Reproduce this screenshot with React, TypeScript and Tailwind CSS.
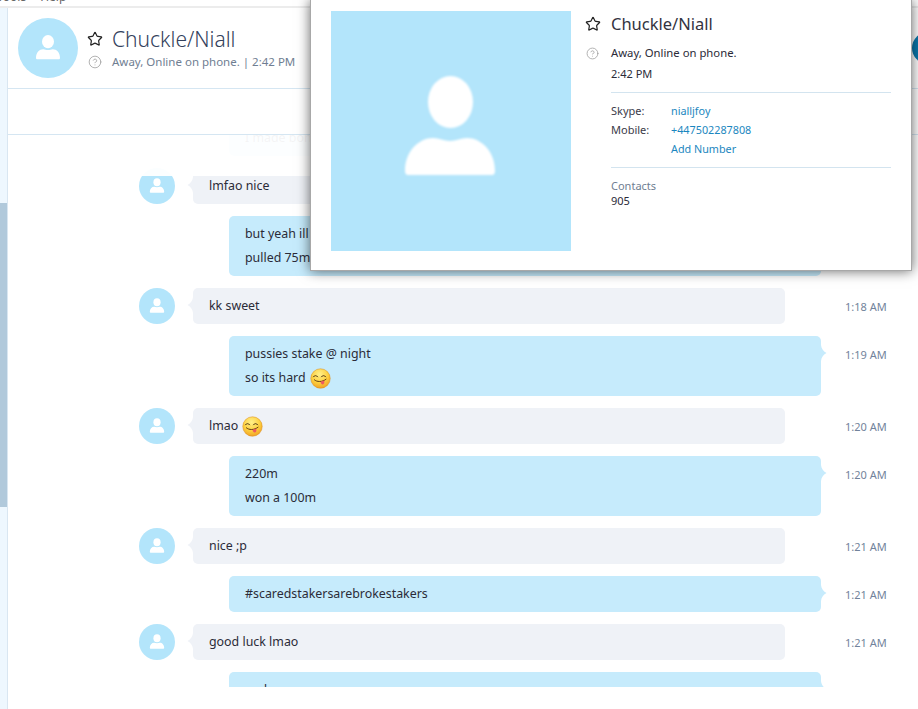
import { ReactNode } from 'react';
import { CircleHelp, Star } from 'lucide-react';

function Avatar({ size }: { size: 'sm' | 'lg' }) {
  return (
    <div
      className={
        size === 'lg'
          ? 'w-[60px] h-[60px] rounded-full bg-[#b3e5fb] shrink-0'
          : 'w-9 h-9 rounded-full bg-[#b3e5fb] shrink-0'
      }
    >
      <svg viewBox="0 0 60 60" className="w-full h-full">
        <ellipse cx="30" cy="23.7" rx="6" ry="6.6" fill="#fff" />
        <path
          d="M19.4 41.3h21.2c.8 0 1.4-.5 1.4-1.4 0-5.3-3.4-8.6-7.2-8.6-1.6 0-3 .8-4.8.8s-3.2-.8-4.8-.8c-3.8 0-7.2 3.3-7.2 8.6 0 .9.6 1.4 1.4 1.4z"
          fill="#fff"
        />
      </svg>
    </div>
  );
}

function Emoji() {
  return (
    <svg viewBox="0 0 22 22" className="inline-block w-[21px] h-[21px] align-[-7px] ml-1">
      <defs>
        <radialGradient id="face" cx="45%" cy="28%" r="78%">
          <stop offset="0%" stopColor="#fff08a" />
          <stop offset="55%" stopColor="#fdd03f" />
          <stop offset="100%" stopColor="#ee9a20" />
        </radialGradient>
      </defs>
      <circle cx="11" cy="11" r="10.2" fill="url(#face)" stroke="#d98a1e" strokeWidth=".5" />
      <path d="M3.6 9.2c1-1.7 3.3-1.7 4.4 0M12 9.2c1-1.7 3.3-1.7 4.4 0" fill="none" stroke="#4a3010" strokeWidth="1" strokeLinecap="round" />
      <path d="M4.6 12.4c2.6 2.4 8 2.6 12.2-.6" fill="none" stroke="#5a3510" strokeWidth="1" strokeLinecap="round" />
      <path d="M11 14.4l3.8-1.2c.7 2 .2 3.6-1.2 4-1.4.3-2.2-.8-2.6-2.8z" fill="#ee5a5f" />
    </svg>
  );
}

function Tail({ own }: { own?: boolean }) {
  if (own) {
    return (
      <svg viewBox="0 0 6 16" className="absolute left-full top-[9px] w-[6px] h-4">
        <path d="M0 0c.4 3.5 2 6 5.5 8C2 10 .4 12.5 0 16z" fill="#c6ebfc" />
      </svg>
    );
  }
  return (
    <svg viewBox="0 0 6 16" className="absolute right-full top-[9px] w-[6px] h-4">
      <path d="M6 0C5.6 3.5 4 6 .5 8 4 10 5.6 12.5 6 16z" fill="#eff2f7" />
    </svg>
  );
}

function Time({ children, own }: { children: ReactNode; own?: boolean }) {
  return (
    <span
      className={
        own
          ? 'ml-6 mt-[11px] text-[11px] leading-4 text-[#72839b] whitespace-nowrap'
          : 'ml-[60px] mt-[11px] text-[11px] leading-4 text-[#72839b] whitespace-nowrap'
      }
    >
      {children}
    </span>
  );
}

function Theirs({ children, time }: { children: ReactNode; time?: string }) {
  return (
    <div className="flex items-start pl-[131px]">
      <Avatar size="sm" />
      <div className="relative ml-[18px] w-[592px] shrink-0 rounded-[5px] bg-[#eff2f7] px-4 py-1.5">
        <Tail />
        {children}
      </div>
      {time && <Time>{time}</Time>}
    </div>
  );
}

function Mine({ children, time }: { children: ReactNode; time?: string }) {
  return (
    <div className="flex items-start pl-[221px]">
      <div className="relative w-[592px] shrink-0 rounded-[5px] bg-[#c6ebfc] px-4 py-1.5">
        <Tail own />
        {children}
      </div>
      {time && <Time own>{time}</Time>}
    </div>
  );
}

function Messages() {
  return (
    <div className="relative h-[552px] overflow-hidden">
      <div className="-mt-[15px] flex flex-col gap-3 text-[12.4px] leading-6 text-[#2b2b38]">
        <Mine>I made bon</Mine>
        <Theirs>lmfao nice</Theirs>
        <Mine>
          <div>but yeah ill</div>
          <div>pulled 75m,</div>
        </Mine>
        <Theirs time="1:18 AM">kk sweet</Theirs>
        <Mine time="1:19 AM">
          <div>pussies stake @ night</div>
          <div>
            so its hard
            <Emoji />
          </div>
        </Mine>
        <Theirs time="1:20 AM">
          lmao
          <Emoji />
        </Theirs>
        <Mine time="1:20 AM">
          <div>220m</div>
          <div>won a 100m</div>
        </Mine>
        <Theirs time="1:21 AM">nice ;p</Theirs>
        <Mine time="1:21 AM">#scaredstakersarebrokestakers</Mine>
        <Theirs time="1:21 AM">good luck lmao</Theirs>
        <Mine>and</Mine>
      </div>
      {/* older messages fade out under the header */}
      <div className="absolute left-0 right-0 top-0 h-[41px] bg-white/95" />
    </div>
  );
}

function ProfilePopup() {
  return (
    <div className="absolute left-[310px] top-0 flex h-[271px] w-[602px] border-b border-l border-r border-[#a8a8a8] bg-white pl-5 pt-[11px] shadow-[0_0_12px_rgba(0,0,0,0.6)]">
      <div className="h-60 w-60 shrink-0 bg-[#b3e5fb]">
        <svg viewBox="0 0 240 240" className="h-full w-full blur-[1px]">
          <ellipse cx="119.5" cy="91" rx="22.5" ry="26" fill="#fff" />
          <path
            d="M77 164h84c2 0 3-1.500 3-4 0-20-14-33-28-33-6 0-11 3-17 3s-11-3-17-3c-14 0-28 13-28 33 0 2.500 1 4 3 4z"
            fill="#fff"
          />
        </svg>
      </div>
      <div className="ml-[14px] w-[306px] shrink-0">
        <div className="mt-px flex h-6 items-center">
          <Star size={16} strokeWidth={1.8} className="text-[#222]" />
          <span className="ml-[10px] text-[16.5px] leading-6 text-[#33333f]">Chuckle/Niall</span>
        </div>
        <div className="ml-[26px] mt-[7px] flex h-[21px] items-center text-[11.3px] text-[#2b2b38]">
          <CircleHelp size={13} strokeWidth={1.4} className="-ml-[25px] mr-3 text-[#9a9a9a]" />
          Away, Online on phone.
        </div>
        <div className="ml-[26px] -mt-px h-[21px] text-[11px] leading-[21px] text-[#2b2b38]">2:42 PM</div>
        <div className="ml-[26px] mt-[8px] border-t border-[#d3e4ef] pt-[8px] text-[11px] leading-[19px]">
          <div className="flex">
            <span className="w-[60px] text-[#3a3a48]">Skype:</span>
            <span className="text-[10.8px] text-[#1b87c0]">nialljfoy</span>
          </div>
          <div className="flex">
            <span className="w-[60px] text-[#3a3a48]">Mobile:</span>
            <span className="text-[10.8px] text-[#1b87c0]">+447502287808</span>
          </div>
          <div className="pl-[60px] text-[10.8px] text-[#1b87c0]">Add Number</div>
        </div>
        <div className="ml-[26px] mt-[9px] border-t border-[#d3e4ef] pt-[10px] text-[11px] leading-[15px]">
          <div className="text-[#6f7e92]">Contacts</div>
          <div className="text-[#2b2b38]">905</div>
        </div>
      </div>
    </div>
  );
}

export default function App() {
  return (
    <div className="relative h-[709px] w-[918px] overflow-hidden bg-white font-['Noto_Sans',sans-serif]">
      <div className="h-2 overflow-hidden border-b-2 border-[#ececec]">
        <div className="-ml-[3px] -mt-[11px] flex gap-[14px] text-[12px] leading-4 text-[#666]">
          <span>Tools</span>
          <span>Help</span>
        </div>
      </div>
      <div className="flex h-[701px]">
        <div className="w-2 shrink-0 border-r border-[#d9e6f1] bg-[#eef7fe] pt-[195px]">
          <div className="h-[304px] bg-[#b1c9db]" />
        </div>
        <div className="min-w-0 flex-1">
          <div className="flex h-[81px] items-center border-b border-[#d5e6f2] pl-[10px]">
            <Avatar size="lg" />
            <div className="ml-[9px] w-[280px] pb-[2px]">
              <div className="flex h-[30px] items-center">
                <Star size={16} strokeWidth={1.8} className="text-[#222]" />
                <span className="ml-[9px] text-[21px] font-light leading-[30px] text-[#33415c]">Chuckle/Niall</span>
              </div>
              <div className="flex items-center text-[11.5px] leading-4 text-[#6f7e92]">
                <CircleHelp size={14} strokeWidth={1.3} className="ml-px mr-[10px] text-[#999]" />
                Away, Online on phone.&nbsp;|&nbsp;2:42 PM
              </div>
            </div>
            <div className="-mr-[26px] ml-auto h-8 w-8 shrink-0 rounded-full bg-[#0a78ad]" />
          </div>
          <div className="h-[46px] border-b border-[#d5e6f2]" />
          <Messages />
        </div>
      </div>
      <ProfilePopup />
    </div>
  );
}
